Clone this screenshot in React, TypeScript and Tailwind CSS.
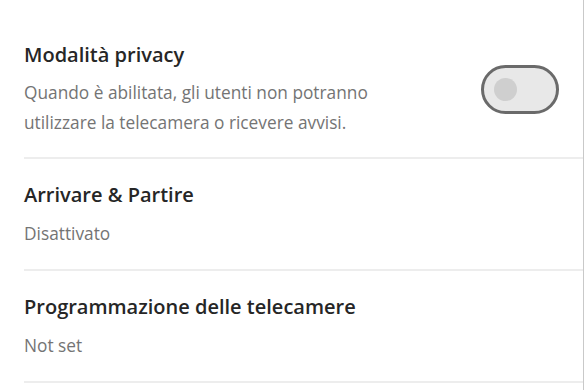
const font = { fontFamily: "'Open Sans', Lato, sans-serif" };

function Toggle() {
  return (
    <div className="w-[78px] h-[49px] rounded-full border-[3px] border-[#6a6a6a] bg-[#e8e8e8] flex items-center pl-[10px] shrink-0">
      <div className="w-[23px] h-[23px] rounded-full bg-[#cfcfcf]" />
    </div>
  );
}

function Row({ title, value }: { title: string; value: string }) {
  return (
    <div className="ml-6 border-b-2 border-[#ededed] pt-[22px] pb-[20px]">
      <div className="text-[20px] leading-[28px] font-semibold text-[#262626]">{title}</div>
      <div className="mt-[10px] text-[17.3px] leading-[30px] text-[#747474]">{value}</div>
    </div>
  );
}

export default function App() {
  return (
    <div className="w-[585px] h-[390px] bg-white overflow-hidden" style={font}>
      <div className="w-[584px] h-full border-r border-[#c9c9c9]">
        <div className="ml-6 border-b-2 border-[#ededed] pt-[41px] pb-[19px] pr-6 flex items-center justify-between">
          <div>
            <div className="text-[20px] leading-[28px] font-semibold text-[#262626]">Modalità privacy</div>
            <div className="mt-[9px] text-[17.3px] leading-[30px] text-[#747474]">
              Quando è abilitata, gli utenti non potranno
              <br />
              utilizzare la telecamera o ricevere avvisi.
            </div>
          </div>
          <Toggle />
        </div>
        <Row title="Arrivare & Partire" value="Disattivato" />
        <Row title="Programmazione delle telecamere" value="Not set" />
      </div>
    </div>
  );
}
